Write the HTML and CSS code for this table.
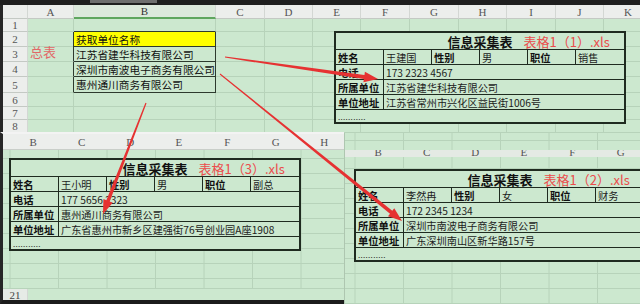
FILE: index.html
```html
<!DOCTYPE html>
<html lang="zh-CN">
<head>
<meta charset="utf-8">
<title>信息采集表</title>
<link rel="stylesheet" href="styles.css">
</head>
<body>
<div class="desk">
  <div class="topbar"><span class="tab"></span></div>
  <div class="sheet main">
    <div class="corner"></div><div class="ch">A</div><div class="ch sel">B</div><div class="ch">C</div><div class="ch">D</div><div class="ch">E</div><div class="ch">F</div><div class="ch">G</div><div class="ch">H</div><div class="ch">I</div><div class="ch">J</div><div class="ch">K</div>

    <div class="rh">1</div><div class="c"></div><div class="c bb"></div><div class="c"></div><div class="c"></div><div class="c"></div><div class="c"></div><div class="c"></div><div class="c"></div><div class="c"></div><div class="c"></div><div class="c"></div>

    <div class="rh">2</div><div class="c br"></div><div class="c dk y">获取单位名称</div><div class="c"></div><div class="c"></div><div class="c"></div><div class="c"></div><div class="c"></div><div class="c"></div><div class="c"></div><div class="c"></div><div class="c"></div>

    <div class="rh">3</div><div class="c br red">总表</div><div class="c dk">江苏省建华科技有限公司</div><div class="c"></div><div class="c"></div><div class="c"></div><div class="c"></div><div class="c"></div><div class="c"></div><div class="c"></div><div class="c"></div><div class="c"></div>

    <div class="rh">4</div><div class="c br"></div><div class="c dk">深圳市南波电子商务有限公司</div><div class="c"></div><div class="c"></div><div class="c"></div><div class="c"></div><div class="c"></div><div class="c"></div><div class="c"></div><div class="c"></div><div class="c"></div>

    <div class="rh">5</div><div class="c br"></div><div class="c dk">惠州通川商务有限公司</div><div class="c"></div><div class="c"></div><div class="c"></div><div class="c"></div><div class="c"></div><div class="c"></div><div class="c"></div><div class="c"></div><div class="c"></div>

    <div class="rh">6</div><div class="c"></div><div class="c"></div><div class="c"></div><div class="c"></div><div class="c"></div><div class="c"></div><div class="c"></div><div class="c"></div><div class="c"></div><div class="c"></div><div class="c"></div>

    <div class="rh">7</div><div class="c"></div><div class="c"></div><div class="c"></div><div class="c"></div><div class="c"></div><div class="c"></div><div class="c"></div><div class="c"></div><div class="c"></div><div class="c"></div><div class="c"></div>

    <div class="rh">8</div><div class="c"></div><div class="c"></div><div class="c"></div><div class="c"></div><div class="c"></div><div class="c"></div><div class="c"></div><div class="c"></div><div class="c"></div><div class="c"></div><div class="c"></div>
  </div>

  <div class="info t1">
    <div class="title"><b>信息采集表</b><span class="fn">表格1（1）.xls</span></div>
    <div class="l">姓名</div><div>王建国</div><div class="l">性别</div><div>男</div><div class="l">职位</div><div class="end">销售</div>
    <div class="l">电话</div><div class="wide">173 2323 4567</div>
    <div class="l">所属单位</div><div class="wide">江苏省建华科技有限公司</div>
    <div class="l">单位地址</div><div class="wide">江苏省常州市兴化区益民街1006号</div>
    <div class="dots">...........</div>
  </div>

  <div class="win w3">
    <div class="whdr"><span class="pad"></span><span>B</span><span>C</span><span>D</span><span>E</span><span>F</span><span>G</span><span>H</span></div>
    <div class="wbody">
      <div class="info">
        <div class="title"><b>信息采集表</b><span class="fn">表格1（3）.xls</span></div>
        <div class="l">姓名</div><div>王小明</div><div class="l">性别</div><div>男</div><div class="l">职位</div><div class="end">副总</div>
        <div class="l">电话</div><div class="wide">177 5656 2323</div>
        <div class="l">所属单位</div><div class="wide">惠州通川商务有限公司</div>
        <div class="l">单位地址</div><div class="wide">广东省惠州市新乡区建强街76号创业园A座1908</div>
        <div class="dots">...........</div>
      </div>
    </div>
    <div class="wfoot"><span class="rn">21</span></div>
  </div>

  <div class="win w2">
    <div class="pre"></div>
    <div class="whdr"><span class="pad"></span><span>B</span><span>C</span><span>D</span><span>E</span><span>F</span><span>G</span></div>
    <div class="wbody">
      <div class="info">
        <div class="title"><b>信息采集表</b><span class="fn">表格1（2）.xls</span></div>
        <div class="l">姓名</div><div>李然冉</div><div class="l">性别</div><div>女</div><div class="l">职位</div><div class="end">财务</div>
        <div class="l">电话</div><div class="wide">172 2345 1234</div>
        <div class="l">所属单位</div><div class="wide">深圳市南波电子商务有限公司</div>
        <div class="l">单位地址</div><div class="wide">广东深圳南山区新华路157号</div>
        <div class="dots">...........</div>
      </div>
    </div>
  </div>

  <svg class="arrows" width="640" height="304" viewBox="0 0 640 304">
    <g fill="#e63232">
      <polygon transform="translate(225 57) rotate(8.18)" points="0,-0.6 140.6,-2.1 140.6,-5.2 154.6,0 140.6,5.2 140.6,2.1 0,0.6"/>
      <polygon transform="translate(220 74) rotate(38.93)" points="0,-0.5 220,-1.8 220,-5 234,0 220,5 220,1.8 0,0.5"/>
      <polygon transform="translate(146 103) rotate(111.18)" points="0,-0.6 105,-1.8 105,-5 119,0 105,5 105,1.8 0,0.6"/>
    </g>
  </svg>
</div>
</body>
</html>
```

FILE: styles.css
```css
* { box-sizing: border-box; }
html, body { margin: 0; padding: 0; }
body {
  width: 640px;
  height: 304px;
  overflow: hidden;
  background: #262626;
  font-family: "Noto Sans CJK SC", "Noto Sans", sans-serif;
}
.desk {
  position: relative;
  width: 640px;
  height: 304px;
  overflow: hidden;
  display: flex;
  flex-direction: column;
}
.topbar {
  flex: none;
  height: 5px;
  background: #1f1f1f;
  padding-left: 90px;
}
.tab {
  display: block;
  width: 67px;
  height: 3px;
  background: #6e6e6e;
}

/* main sheet */
.main {
  flex: 1;
  margin-left: 3px;
  display: grid;
  grid-template-columns: 25px 46px 142px 49px 48px 48px 49px 49px 48px 49px 48px 49px;
  grid-template-rows: 14px 13px 15px 15px 15px 16px 14px 13px 13px;
  align-content: start;
  background: #cce8cf;
}
.ch, .rh, .corner, .rn {
  background: #eceeec;
  color: #555;
  font-family: "Liberation Serif", "DejaVu Serif", serif;
  font-size: 11px;
  line-height: 12px;
  display: flex;
  align-items: center;
  justify-content: center;
  border-right: 1px solid #d3d7d3;
  border-bottom: 1px solid #c4c9c4;
}
.ch.sel {
  background: #dce9dc;
  border-bottom: 2px solid #5fa65f;
  color: #333;
}
.c {
  border-right: 1px solid #b7d3ba;
  border-bottom: 1px solid #b7d3ba;
  font-size: 10.7px;
  line-height: 13px;
  padding-left: 2px;
  white-space: nowrap;
  color: #111;
  display: flex;
  align-items: center;
}
.c.dk { border-right-color: #2d3a2e; border-bottom-color: #2d3a2e; }
.c.bb { border-bottom-color: #2d3a2e; }
.c.br { border-right-color: #2d3a2e; }
.c.y { background: #ffff00; }
.c.red {
  color: #e26767;
  font-size: 13px;
  line-height: 13px;
  align-items: flex-start;
  padding: 0 0 0 2px;
  margin-top: -2px;
}

/* info tables */
.info {
  display: grid;
  grid-template-columns: repeat(6, 48px);
  grid-template-rows: 17px 15px 15px 15px 15px 12px;
  border: 2px solid #1f2b20;
  background: #cce8cf;
  width: max-content;
}
.info > div {
  border-right: 1px solid #1f2b20;
  border-bottom: 1px solid #1f2b20;
  padding-left: 2px;
  white-space: nowrap;
  overflow: hidden;
  display: flex;
  align-items: center;
  font-size: 10.2px;
  line-height: 13px;
  color: #1c1c1c;
}
.info .l { font-weight: 700; font-size: 10.3px; color: #111; }
.info .end { border-right: none; }
.info .title {
  grid-column: 1 / -1;
  border-right: none;
  display: grid;
  grid-template-columns: 1fr auto 1fr;
  align-items: center;
  padding: 0;
  line-height: 15px;
}
.info .wide { grid-column: 2 / -1; border-right: none; }
.info .dots {
  grid-column: 1 / -1;
  border: none;
  align-items: center;
  line-height: 11px;
  font-size: 8px;
  letter-spacing: 0.3px;
}
.title b { grid-column: 2; font-size: 13px; color: #111; }
.title .fn { font-size: 13px; color: #eb4c4c; margin-left: 11px; justify-self: start; }

.t1 { position: absolute; left: 334px; top: 31px; }

/* overlapping windows */
.win {
  position: absolute;
  display: flex;
  flex-direction: column;
  background: #cce8cf;
  overflow: hidden;
}
.whdr {
  flex: none;
  display: flex;
  background: #eceeec;
  color: #555;
  font-family: "Liberation Serif", "DejaVu Serif", serif;
  font-size: 11px;
}
.whdr span {
  flex: none;
  width: 48.5px;
  text-align: center;
}
.wbody { flex: 1; }

.w3 {
  left: 0;
  top: 132px;
  width: 344px;
  height: 172px;
  border-left: 3px solid #262626;
  border-top: 2px solid #f3f3f3;
  border-bottom: 4px solid #1c1c1c;
}
.w3 .whdr { height: 16px; line-height: 16px; border-bottom: 1px solid #c9cec9; }
.w3 .whdr .pad { width: 6px; }
.w3 .wbody {
  padding: 8px 0 0 6px;
  background-color: #cce8cf;
  background-image:
    linear-gradient(to right, transparent 47.5px, #b7d3ba 47.5px),
    linear-gradient(to bottom, transparent 14px, #b7d3ba 14px);
  background-size: 48.5px 100%, 100% 15px;
  background-position: 7.5px 0, 0 9px;
}
.wfoot {
  flex: none;
  height: 12px;
  display: flex;
  border-top: 1px solid #b7d3ba;
}
.rn { width: 25px; font-size: 11px; border-bottom: none; background: #e6ebe6; color: #444; }

.w2 {
  left: 344px;
  top: 133px;
  width: 296px;
  height: 171px;
  border-left: 1px solid #aec6b0;
}
.w2 .pre {
  flex: none;
  height: 17px;
  background-image:
    linear-gradient(to right, transparent 47.5px, #b7d3ba 47.5px),
    linear-gradient(to bottom, transparent 14px, #b7d3ba 14px);
  background-size: 48.5px 100%, 100% 15px;
  background-position: 10.5px 0, 0 8px;
}
.w2 .whdr { height: 7px; line-height: 5px; overflow: hidden; background: #e4eae4; }
.w2 .whdr .pad { width: 9px; }
.w2 .wbody {
  padding: 12px 0 0 9px;
  background-color: #cce8cf;
  background-image:
    linear-gradient(to right, transparent 47.5px, #b7d3ba 47.5px),
    linear-gradient(to bottom, transparent 14px, #b7d3ba 14px);
  background-size: 48.5px 100%, 100% 15px;
  background-position: 10.5px 0, 0 12px;
}

.arrows {
  position: absolute;
  left: 0;
  top: 0;
  pointer-events: none;
}
```
